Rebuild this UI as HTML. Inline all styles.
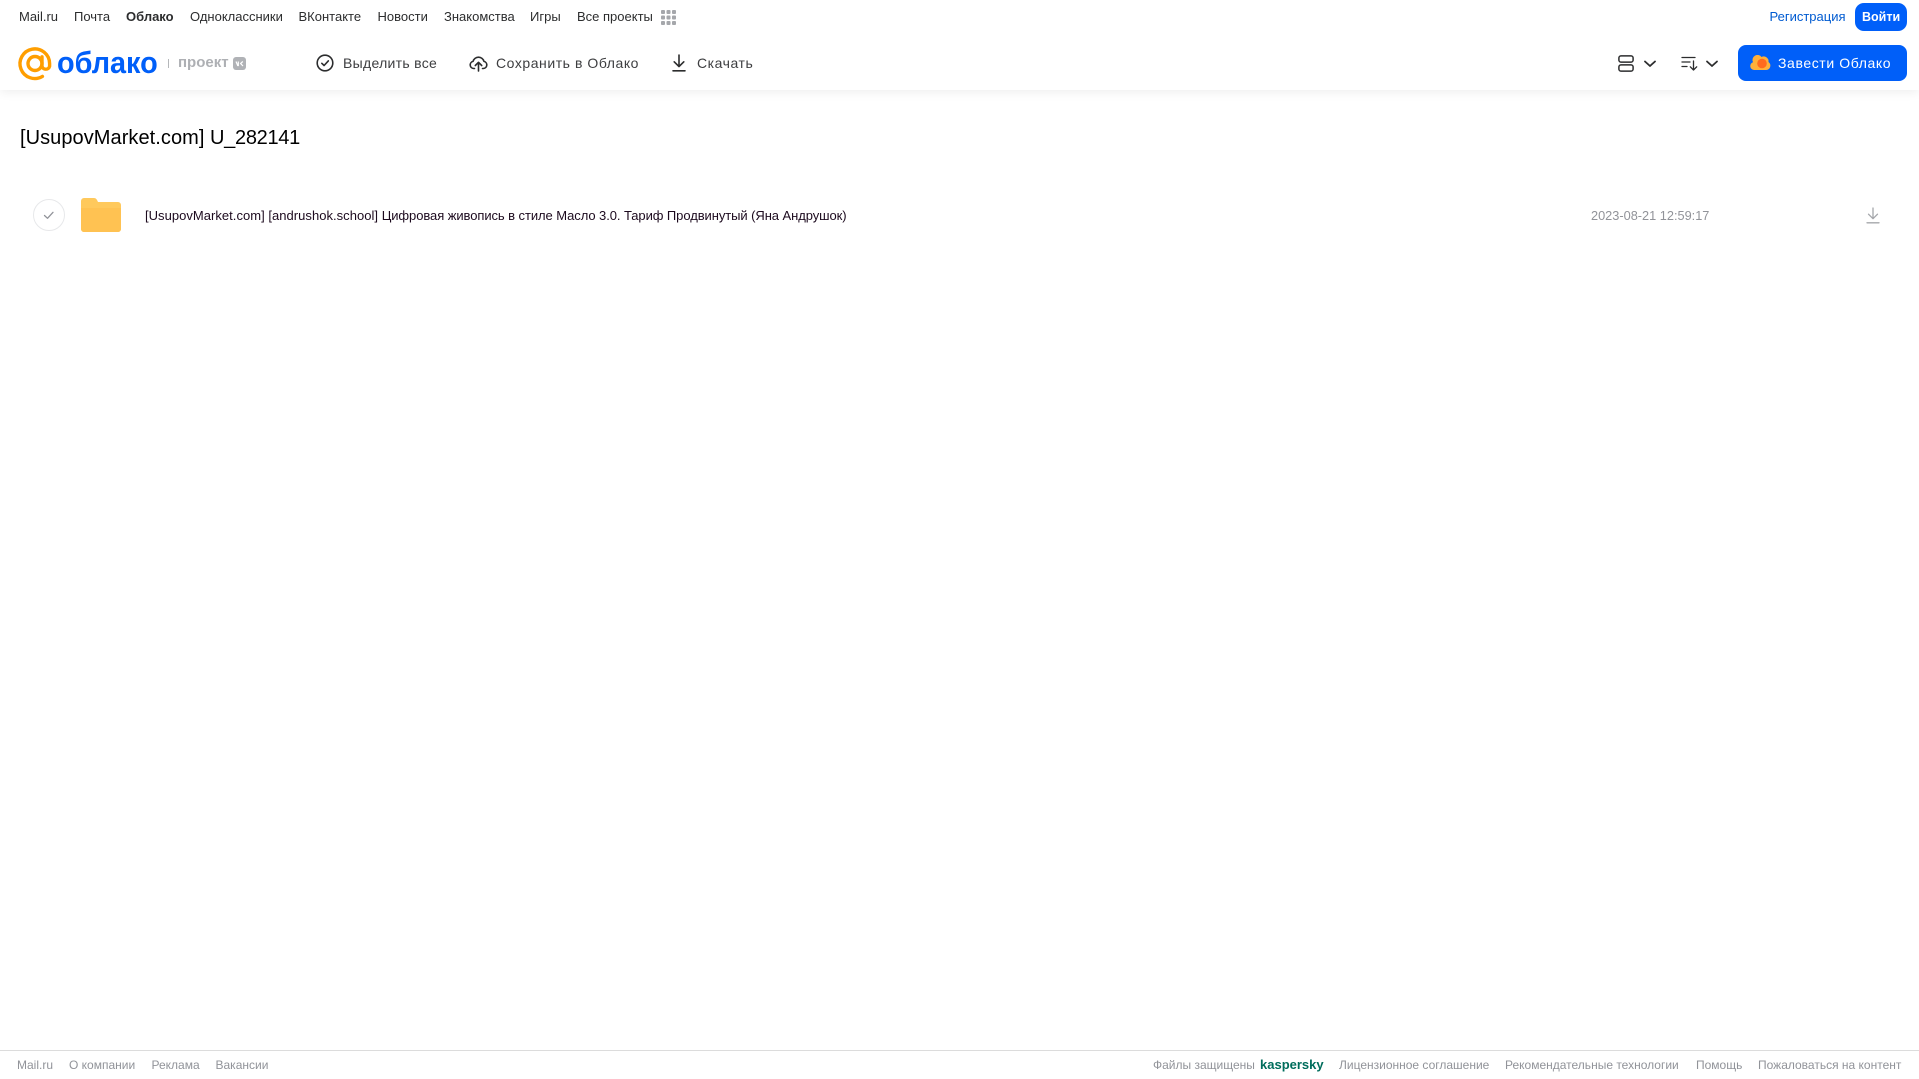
<!DOCTYPE html>
<html lang="ru">
<head>
<meta charset="utf-8">
<title>Облако</title>
<style>
html,body{margin:0;padding:0;background:#fff;width:1919px;height:1079px;overflow:hidden;font-family:"Liberation Sans",Arial,sans-serif}
a,span,h1{position:absolute;white-space:nowrap;text-decoration:none;margin:0;font-weight:normal}
i{font-style:normal}
svg{position:absolute;overflow:visible}
#hdr{position:absolute;left:0;top:0;width:1919px;height:90px;background:#fff;box-shadow:0 2px 10px rgba(0,0,0,.07)}
.n{top:8px;font-size:13px;line-height:17px;color:#2c2d2e}
.t{top:54px;font-size:14px;line-height:18px;color:#3d3e40;letter-spacing:.55px}
.f{top:1057px;font-size:12px;line-height:16px;color:#919399}
#btn1{position:absolute;left:1855px;top:3px;width:52px;height:28px;border-radius:9px;background:#005ff9}
#btn2{position:absolute;left:1738px;top:45px;width:169px;height:36px;border-radius:8px;background:#005ff9}
#ln{position:absolute;left:0;top:1050px;width:1919px;height:1px;background:#dcdcdc}
</style>
</head>
<body>
<div id="hdr"></div>
<a class="n" style="left:19px">Mail.ru</a>
<a class="n" style="left:74px">Почта</a>
<a class="n" style="left:126px;font-weight:bold">Облако</a>
<a class="n" style="left:190px">Одноклассники</a>
<a class="n" style="left:298.5px">ВКонтакте</a>
<a class="n" style="left:377.5px">Новости</a>
<a class="n" style="left:444px">Знакомства</a>
<a class="n" style="left:530px">Игры</a>
<a class="n" style="left:577px">Все проекты</a>
<svg style="left:661px;top:10px" width="15" height="15" fill="#a5a7ab"><rect width="4" height="4" rx="1"/><rect x="5.5" width="4" height="4" rx="1"/><rect x="11" width="4" height="4" rx="1"/><rect y="5.5" width="4" height="4" rx="1"/><rect x="5.5" y="5.5" width="4" height="4" rx="1"/><rect x="11" y="5.5" width="4" height="4" rx="1"/><rect y="11" width="4" height="4" rx="1"/><rect x="5.5" y="11" width="4" height="4" rx="1"/><rect x="11" y="11" width="4" height="4" rx="1"/></svg>
<a class="n" style="left:1769.5px;color:#005bd1">Регистрация</a>
<div id="btn1"></div>
<a class="n" style="left:1862px;top:9px;color:#fff;font-weight:bold;font-size:12.5px">Войти</a>

<svg style="left:18px;top:47px" width="34" height="34" viewBox="0 0 34 34" fill="none" stroke="#ff9e00" stroke-width="3.4" stroke-linecap="round"><circle cx="17" cy="16.5" r="7"/><path d="M24 9.8v9.4a3.9 3.9 0 0 0 7.6 0v-2.7A14.8 14.8 0 1 0 24.4 29.4"/></svg>
<span style="left:57px;top:44px;font-size:31px;line-height:37px;color:#005ff9;font-weight:bold;transform:scaleX(.93);transform-origin:0 50%">облако</span>
<div style="position:absolute;left:168px;top:59px;width:1px;height:9px;background:#b5b7ba"></div>
<span style="left:178px;top:54px;font-size:15px;line-height:18px;color:#aeb0b4;font-weight:bold">проект</span>
<svg style="left:233px;top:57px" width="13" height="13"><rect width="13" height="13" rx="3" fill="#b0b2b6"/><path d="M3 4.5l1.7 4h.6V4.5M9.8 4.5L7.6 6.5l2.4 2.5" fill="none" stroke="#fff" stroke-width="1.2"/></svg>

<svg style="left:316px;top:54px" width="18" height="18" viewBox="0 0 18 18" fill="none" stroke="#2c2d2e" stroke-width="1.6" stroke-linecap="round" stroke-linejoin="round"><circle cx="9" cy="9" r="7.8"/><path d="M5.8 9.3l2.3 2.2 4.2-4.6"/></svg>
<a class="t" style="left:343px;letter-spacing:.3px">Выделить все</a>
<svg style="left:469px;top:54px" width="19" height="18" viewBox="0 0 19 18" fill="none" stroke="#2c2d2e" stroke-width="1.6" stroke-linecap="round" stroke-linejoin="round"><path d="M5.5 14.5H4.6A3.6 3.6 0 0 1 4 7.4 5.7 5.7 0 0 1 15 7.4a3.6 3.6 0 0 1 -.6 7.1h-.9"/><path d="M9.5 17V8.5M6.3 11.5l3.2-3.2 3.2 3.2"/></svg>
<a class="t" style="left:496px">Сохранить в Облако</a>
<svg style="left:672px;top:54px" width="14" height="18" viewBox="0 0 14 18" fill="none" stroke="#2c2d2e" stroke-width="1.6" stroke-linecap="round" stroke-linejoin="round"><path d="M7 1v11.5M2.2 7.8L7 12.6l4.8-4.8M1 16.8h12"/></svg>
<a class="t" style="left:697px">Скачать</a>

<svg style="left:1618px;top:55px" width="16" height="17" viewBox="0 0 16 17" fill="none" stroke="#2c2d2e" stroke-width="1.5"><rect x=".9" y=".9" width="14.2" height="6.2" rx="2"/><rect x=".9" y="9.9" width="14.2" height="6.2" rx="2"/></svg>
<svg style="left:1644px;top:60px" width="12" height="8" viewBox="0 0 12 8" fill="none" stroke="#2c2d2e" stroke-width="1.8" stroke-linecap="round" stroke-linejoin="round"><path d="M1 1.5l5 4.5 5-4.5"/></svg>
<svg style="left:1681px;top:56px" width="17" height="15" viewBox="0 0 17 15" fill="none" stroke="#2c2d2e" stroke-width="1.3" stroke-linecap="round" stroke-linejoin="round"><path d="M1 1.5h13M1 6h8M1 10.5h5M12.5 5v9M9.3 10.8l3.2 3.2 3.2-3.2"/></svg>
<svg style="left:1706px;top:60px" width="12" height="8" viewBox="0 0 12 8" fill="none" stroke="#2c2d2e" stroke-width="1.8" stroke-linecap="round" stroke-linejoin="round"><path d="M1 1.5l5 4.5 5-4.5"/></svg>
<div id="btn2"></div>
<svg style="left:1750px;top:54px" width="19" height="16" viewBox="0 0 19 16"><path d="M4 16a4 4 0 0 1 -1-7.8A5 5 0 0 1 11.5 3 4.8 4.8 0 0 1 18.5 8a4.4 4.4 0 0 1 -3 8z" fill="#ffb03a"/><circle cx="12" cy="9.5" r="4.8" fill="#ff6a1f"/></svg>
<a class="t" style="left:1778px;color:#fff;letter-spacing:.6px">Завести Облако</a>

<h1 style="left:20px;top:126px;font-size:20px;line-height:24px;color:#000"><i style="letter-spacing:.06px">[UsupovMarket.com]</i> <i style="letter-spacing:-.3px">U_282141</i></h1>

<svg style="left:33px;top:199px" width="32" height="32" viewBox="0 0 32 32" fill="none"><circle cx="16" cy="16" r="15.5" stroke="#e7e8ea"/><path d="M11.5 16.5l3 2.8 5.5-6" stroke="#919399" stroke-width="1.3" stroke-linecap="round" stroke-linejoin="round"/></svg>
<svg style="left:81px;top:198px" width="40" height="34" viewBox="0 0 40 34"><path d="M3 0h10c2 0 3 1.5 4 4h20a3 3 0 0 1 3 3v24a3 3 0 0 1 -3 3H3a3 3 0 0 1 -3-3V3a3 3 0 0 1 3-3z" fill="#ffc95c"/><path d="M0 10h40v21a3 3 0 0 1 -3 3H3a3 3 0 0 1 -3-3z" fill="#ffc252"/></svg>
<a style="left:145px;top:208px;font-size:13px;line-height:16px;color:#1c0a1e"><i style="letter-spacing:.03px">[UsupovMarket.com] [andrushok.school] </i><i style="letter-spacing:-.075px">Цифровая живопись в стиле Масло 3.0. Тариф Продвинутый (Яна Андрушок)</i></a>
<span style="left:1591px;top:208px;font-size:12.75px;line-height:16px;color:#919399">2023-08-21 12:59:17</span>
<svg style="left:1866px;top:207px" width="14" height="17" viewBox="0 0 14 17" fill="none" stroke="#a5a7ab" stroke-width="1.3" stroke-linecap="round" stroke-linejoin="round"><path d="M7 1v10.5M2.5 7.2L7 11.7l4.5-4.5M1 15.8h12"/></svg>

<div id="ln"></div>
<a class="f" style="left:17px">Mail.ru</a>
<a class="f" style="left:69px">О компании</a>
<a class="f" style="left:151.5px">Реклама</a>
<a class="f" style="left:215.5px">Вакансии</a>
<span class="f" style="left:1153px">Файлы защищены</span>
<span class="f" style="left:1260px;top:1057px;font-size:13px;font-weight:bold;color:#006d5c">kaspersky</span>
<a class="f" style="left:1339px">Лицензионное соглашение</a>
<a class="f" style="left:1505px">Рекомендательные технологии</a>
<a class="f" style="left:1696px">Помощь</a>
<a class="f" style="left:1758px">Пожаловаться на контент</a>
</body>
</html>
